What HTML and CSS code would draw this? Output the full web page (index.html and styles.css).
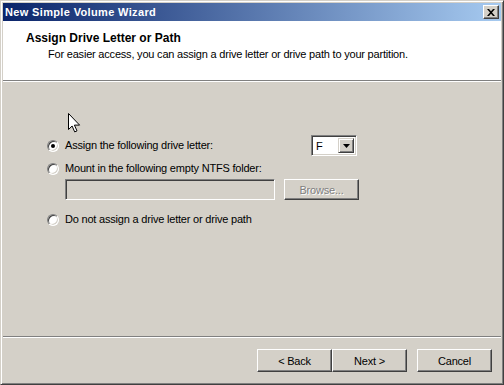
FILE: index.html
```html
<!DOCTYPE html>
<html lang="en">
<head>
    <meta charset="UTF-8">
    <meta name="viewport" content="width=device-width, initial-scale=1.0">
    <title>New Simple Volume Wizard</title>
    <link rel="stylesheet" href="styles.css">
</head>
<body>

<div class="window">
    <div class="title-bar">
        <span class="title-text">New Simple Volume Wizard</span>
        <div class="close-btn">
            <svg width="8" height="7" viewBox="0 0 8 7">
                <path d="M0 0h2l2 2.2 2-2.2h2L5 3.5 8 7H6L4 4.8 2 7H0l3-3.5z" fill="#000"/>
            </svg>
        </div>
    </div>

    <div class="header">
        <div class="header-title">Assign Drive Letter or Path</div>
        <div class="header-sub">For easier access, you can assign a drive letter or drive path to your partition.</div>
    </div>

    <div class="content">
        <div class="row row-letter">
            <span class="radio checked"></span>
            <span class="label">Assign the following drive letter:</span>
            <div class="combo">
                <span class="combo-value">F</span>
                <span class="combo-btn">
                    <svg width="7" height="4" viewBox="0 0 7 4"><path d="M0 0h7L3.5 4z" fill="#000"/></svg>
                </span>
            </div>
        </div>

        <div class="row">
            <span class="radio"></span>
            <span class="label">Mount in the following empty NTFS folder:</span>
        </div>

        <div class="folder-row">
            <div class="textbox disabled"></div>
            <div class="button disabled-btn">Browse...</div>
        </div>

        <div class="row row-none">
            <span class="radio"></span>
            <span class="label">Do not assign a drive letter or drive path</span>
        </div>
    </div>

    <div class="footer">
        <div class="button">&lt; Back</div>
        <div class="button">Next &gt;</div>
        <div class="button cancel">Cancel</div>
    </div>

    <!-- mouse pointer left on the dialog -->
    <svg class="pointer" width="15" height="22" viewBox="0 0 15 22">
        <path d="M1.5 1.5v16l3.6-3.5 2.6 5.9 2.3-1-2.6-5.8h5.2z" fill="#fff" stroke="#000" stroke-width="1" stroke-linejoin="miter"/>
    </svg>
</div>

</body>
</html>
```

FILE: styles.css
```css
body {
    margin: 0;
    padding: 0;
    background-color: #d4d0c8;
    font-family: "Liberation Sans", Arial, sans-serif;
    font-size: 11px;
    letter-spacing: -0.2px;
    color: black;
}

.window {
    position: relative;
    box-sizing: border-box;
    width: 504px;
    height: 385px;
    display: flex;
    flex-direction: column;
    border: 1px solid;
    border-color: #d4d0c8 #404040 #404040 #d4d0c8;
    box-shadow: inset 1px 1px #fff, inset -1px -1px #808080;
    padding: 2px;
}

.title-bar {
    height: 18px;
    flex-shrink: 0;
    display: flex;
    align-items: center;
    justify-content: space-between;
    padding: 0 2px 0 2px;
    background: linear-gradient(to right, #0a246a, #a6caf0);
}

.title-text {
    color: white;
    font-weight: bold;
    letter-spacing: 0.35px;
}

.close-btn {
    box-sizing: border-box;
    width: 16px;
    height: 14px;
    display: flex;
    align-items: center;
    justify-content: center;
    background: #d4d0c8;
    border: 1px solid;
    border-color: #fff #404040 #404040 #fff;
    box-shadow: inset -1px -1px #808080;
}

.header {
    height: 60px;
    flex-shrink: 0;
    background: white;
    border-bottom: 1px solid #808080;
    box-shadow: 0 1px #fff;
    margin-bottom: 1px;
    padding: 10px 0 0 23px;
    box-sizing: border-box;
}

.header-title {
    font-weight: bold;
    font-size: 12px;
    letter-spacing: 0;
    line-height: 14px;
}

.header-sub {
    margin-top: 3px;
    padding-left: 22px;
    line-height: 13px;
}

.content {
    flex: 1;
    padding: 53px 0 0 44px;
    border-bottom: 1px solid #808080;
    box-shadow: 0 1px #fff;
    margin-bottom: 1px;
}

.row {
    display: flex;
    align-items: center;
    height: 13px;
    margin-top: 6px;
}

.row-letter {
    display: grid;
    grid-template-columns: 18px 246px 46px;
    height: 21px;
    margin-top: 0;
}

.row-none {
    margin-top: 13px;
}

.radio {
    box-sizing: border-box;
    width: 12px;
    height: 12px;
    margin-right: 6px;
    border-radius: 50%;
    background: white;
    border: 1px solid;
    border-color: #808080 #fff #fff #808080;
    box-shadow: inset 1px 1px #404040, inset -1px -1px #d4d0c8;
    display: flex;
    align-items: center;
    justify-content: center;
}

.radio.checked::after {
    content: "";
    width: 4px;
    height: 4px;
    border-radius: 50%;
    background: black;
}

.label {
    line-height: 13px;
    white-space: nowrap;
}

.combo {
    box-sizing: border-box;
    width: 46px;
    height: 21px;
    background: white;
    border: 1px solid;
    border-color: #808080 #fff #fff #808080;
    box-shadow: inset 1px 1px #404040, inset -1px -1px #d4d0c8;
    display: flex;
    align-items: center;
    justify-content: space-between;
    padding: 2px;
}

.combo-value {
    padding-left: 2px;
}

.combo-btn {
    box-sizing: border-box;
    width: 16px;
    height: 15px;
    display: flex;
    align-items: center;
    justify-content: center;
    background: #d4d0c8;
    border: 1px solid;
    border-color: #d4d0c8 #404040 #404040 #d4d0c8;
    box-shadow: inset 1px 1px #fff, inset -1px -1px #808080;
}

.folder-row {
    display: flex;
    margin: 4px 0 0 18px;
    gap: 9px;
}

.textbox {
    box-sizing: border-box;
    width: 210px;
    height: 21px;
    background: #d4d0c8;
    border: 1px solid;
    border-color: #808080 #fff #fff #808080;
    box-shadow: inset 1px 1px #404040, inset -1px -1px #d4d0c8;
}

.button {
    box-sizing: border-box;
    width: 75px;
    height: 23px;
    display: flex;
    align-items: center;
    justify-content: center;
    background: #d4d0c8;
    border: 1px solid;
    border-color: #fff #404040 #404040 #fff;
    box-shadow: inset -1px -1px #808080;
}

.disabled-btn {
    height: 21px;
    color: #808080;
    text-shadow: 1px 1px #fff;
}

.footer {
    height: 44px;
    flex-shrink: 0;
    display: flex;
    justify-content: flex-end;
    padding: 11px 9px 0 0;
    box-sizing: border-box;
}

.cancel {
    margin-left: 10px;
}

.pointer {
    position: absolute;
    left: 66px;
    top: 111px;
}
```
